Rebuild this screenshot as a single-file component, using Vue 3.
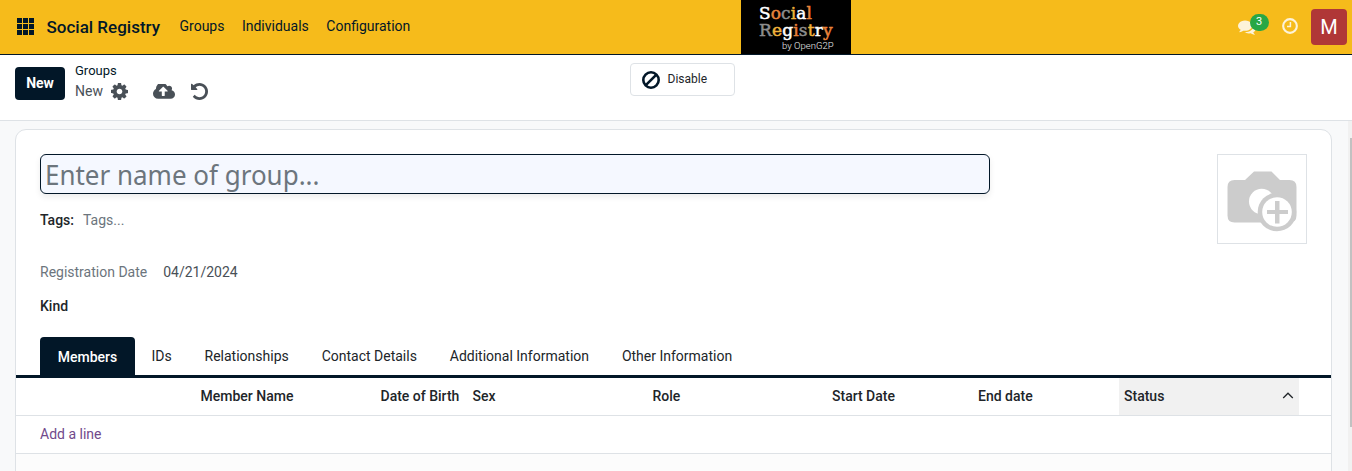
<script setup>
const menus = ['Groups', 'Individuals', 'Configuration']
const tabs = ['IDs', 'Relationships', 'Contact Details', 'Additional Information', 'Other Information']
const columns = ['', 'Member Name', 'Date of Birth', 'Sex', 'Role', 'Start Date', 'End date']
const white = '#ffffff'
const orange = '#e8833a'
const grey = '#8d8d8d'
const gold = '#f0b43c'
const social = [['S', white], ['o', orange], ['c', grey], ['i', gold], ['a', white], ['l', orange]]
const registry = [['R', grey], ['e', gold], ['g', white], ['i', orange], ['s', grey], ['t', gold], ['r', white], ['y', orange]]
</script>

<template>
  <div class="app">
    <header class="navbar">
      <svg class="apps" viewBox="0 0 17 17" shape-rendering="crispEdges">
        <template v-for="r in 3" :key="r">
          <rect v-for="c in 3" :key="c" :x="(c - 1) * 6" :y="(r - 1) * 6" width="5" height="5" />
        </template>
      </svg>
      <span class="brand">Social Registry</span>
      <nav class="menus">
        <a v-for="m in menus" :key="m">{{ m }}</a>
      </nav>
      <div class="logo">
        <div class="slab social"><span v-for="(l, i) in social" :key="i" :style="{ color: l[1] }">{{ l[0] }}</span></div>
        <div class="slab registry"><span v-for="(l, i) in registry" :key="i" :style="{ color: l[1] }">{{ l[0] }}</span></div>
        <div class="by">by OpenG2P</div>
      </div>
      <div class="systray">
        <div class="chat">
          <svg viewBox="0 0 1792 1792"><path d="M1408 768q0 139-94 257t-256.500 186.500-353.500 68.500q-86 0-176-16-124 88-278 128-36 9-86 16h-3q-11 0-20.500-8t-11.500-21q-1-3-1-6.500t.5-6.500 2-6l2.500-5 3.500-5.500 4-5 4.500-5 4-4.500q5-6 23-25t26-29.500 22.500-29 25-38.500 20.500-44q-124-72-195-177t-71-224q0-139 94-257t256.500-186.500 353.500-68.500 353.500 68.500 256.500 186.500 94 257zm384 256q0 120-71 224.500t-195 176.500q10 24 20.500 44t25 38.500 22.500 29 26 29.500 23 25q1 1 4 4.500t4.500 5 4 5 3.500 5.500l2.500 5 2 6 .5 6.500-1 6.500q-3 14-13 22t-22 7q-50-7-86-16-154-40-278-128-90 16-176 16-271 0-472-132 58 4 88 4 161 0 309-45t264-129q125-92 192-212t67-257q0-77-23-152 129 71 204 178t75 230z" /></svg>
          <span class="badge">3</span>
        </div>
        <svg class="clock" viewBox="0 0 16 16">
          <circle cx="8" cy="8" r="6.850" />
          <path d="M8.400 4v4.600H5" />
        </svg>
        <span class="avatar">M</span>
      </div>
    </header>

    <section class="control">
      <button class="new">New</button>
      <div class="crumbs">
        <span class="parent">Groups</span>
        <div class="current">
          <span class="name">New</span>
          <svg class="cog" viewBox="128 128 1536 1536"><path d="M1152 896q0-106-75-181t-181-75-181 75-75 181 75 181 181 75 181-75 75-181zm512-109v222q0 12-8 23t-20 13l-185 28q-19 54-39 91 35 50 107 138 10 12 10 25t-9 23q-27 37-99 108t-94 71q-12 0-26-9l-138-108q-44 23-91 38-16 136-29 186-7 28-36 28h-222q-14 0-24.500-8.500t-11.500-21.500l-28-184q-49-16-90-37l-141 107q-10 9-25 9-14 0-25-11-126-114-165-168-7-10-7-23 0-12 8-23 15-21 51-66.500t54-70.500q-27-50-41-99l-183-27q-13-2-21-12.500t-8-23.500v-222q0-12 8-23t19-13l186-28q14-46 39-92-40-57-107-138-10-12-10-24 0-10 9-23 26-36 98.500-107.500t94.500-71.500q13 0 26 10l138 107q44-23 91-38 16-136 29-186 7-28 36-28h222q14 0 24.500 8.500t11.500 21.500l28 184q49 16 90 37l142-107q9-9 24-9 13 0 25 10 129 119 165 170 7 8 7 22 0 12-8 23-15 21-51 66.500t-54 70.500q26 50 41 98l183 28q13 2 21 12.500t8 23.500z" /></svg>
          <svg class="cloud" viewBox="0 256 1920 1280"><path d="M1280 864q0-14-9-23l-352-352q-9-9-23-9t-23 9l-351 351q-10 12-10 24 0 14 9 23t23 9h224v352q0 13 9.500 22.500t22.500 9.500h192q13 0 22.500-9.500t9.500-22.500v-352h224q13 0 22.500-9.500t9.500-22.500zm640 288q0 159-112.500 271.500t-271.500 112.500h-1088q-185 0-316.500-131.500t-131.500-316.500q0-130 70-240t188-165q-2-30-2-43 0-212 150-362t362-150q156 0 285.500 87t188.500 231q71-62 166-62 106 0 181 75t75 181q0 76-41 138 130 31 213.500 135.500t83.500 238.500z" /></svg>
          <svg class="undo" viewBox="128 128 1536 1536"><path d="M1664 896q0 156-61 298t-164 245-245 164-298 61q-172 0-327-72.500t-264-204.500q-7-10-6.500-22.500t8.500-20.500l137-138q10-9 25-9 16 2 23 12 73 95 179 147t225 52q104 0 198.500-40.500t163.500-109.500 109.500-163.500 40.500-198.500-40.500-198.500-109.500-163.500-163.500-109.500-198.500-40.500q-98 0-188 35.500t-160 101.500l137 138q31 30 14 69-17 40-59 40h-448q-26 0-45-19t-19-45v-448q0-42 40-59 39-17 69 14l130 129q107-101 244.500-156.500t284.500-55.500q156 0 298 61t245 164 164 245 61 298z" /></svg>
        </div>
      </div>
      <button class="disable">
        <svg viewBox="0 0 18 18"><circle cx="9" cy="9" r="7.700" /><path d="M3.600 14.400 14.400 3.600" /></svg>
        <span>Disable</span>
      </button>
    </section>

    <main class="content">
      <div class="sheet">
        <div class="top">
          <div class="fields">
            <div class="title"><span>Enter name of group...</span></div>
            <div class="tags"><b>Tags:</b><span>Tags...</span></div>
            <div class="date"><label>Registration Date</label><span>04/21/2024</span></div>
            <div class="kind">Kind</div>
          </div>
          <div class="photo">
            <svg viewBox="0 0 88 88">
              <path fill="#ccc" d="M36 16.500h17.500l8.500 8.500H71.500q7 0 7 7v28.500q0 7-7 7H16.500q-7 0-7-7V32q0-7 7-7h10.500z" />
              <circle cx="43.700" cy="46.500" r="12.700" fill="#fff" />
              <circle cx="59" cy="57" r="19.300" fill="#ccc" />
              <circle cx="59" cy="57" r="14.800" fill="#fff" />
              <path fill="#ccc" d="M57 46h4.500V55h8.500v4h-8.500v9.500H57v-9.500h-8v-4h8z" />
            </svg>
          </div>
        </div>
        <div class="tabs">
          <span class="tab active">Members</span>
          <span v-for="t in tabs" :key="t" class="tab">{{ t }}</span>
        </div>
        <div class="thead">
          <span v-for="c in columns" :key="c">{{ c }}</span>
          <span class="sorted">Status
            <svg viewBox="0 0 12 8"><path d="M1.200 6 6 1.200 10.800 6" /></svg>
          </span>
        </div>
        <div class="add">Add a line</div>
        <div class="rest"></div>
      </div>
      <div class="track"><div class="thumb"></div></div>
    </main>
  </div>
</template>

<style>
body { overflow: hidden; }
</style>

<style scoped>
* { box-sizing: border-box; }
.app { width: 1352px; height: 471px; display: flex; flex-direction: column; overflow: hidden; background: #fff; font: 14px/21px Roboto, sans-serif; color: #212529; }
svg { display: block; flex: none; }

.navbar { position: relative; height: 55px; flex: none; display: flex; align-items: center; padding: 0 5px 1px 17px; background: #f6bb1b; border-bottom: 1px solid #021728; }
.apps { width: 17px; height: 17px; fill: #021728; }
.brand { margin-left: 12.500px; padding-top: 2px; width: 133px; font-size: 17px; font-weight: 500; color: #021728; white-space: nowrap; }
.menus { display: flex; gap: 17.500px; color: #021728; padding-bottom: 1px; }
.logo { position: absolute; left: 741px; top: 0; width: 110px; height: 54px; padding: 5px 0 0 18px; background: #000; }
.slab { height: 17px; font: 17px/17px "DejaVu Serif", serif; -webkit-text-stroke: .5px; white-space: nowrap; width: max-content; }
.social { letter-spacing: .1px; }
.registry { letter-spacing: .15px; }
.by { margin: 1px 0 0 23px; font: 300 9.500px/11px Roboto, sans-serif; color: #eee; }
.systray { margin-left: auto; display: flex; align-items: center; }
.chat { position: relative; width: 44.500px; }
.chat svg { width: 18px; height: 18px; fill: #fdf3d9; }
.badge { position: absolute; left: 12px; top: -4px; width: 19px; height: 17px; border-radius: 9px; background: #28a745; color: #fff; font-size: 11px; line-height: 15px; text-align: center; }
.clock { width: 16px; height: 16px; margin: -1px 13px 0 0; fill: none; stroke: #fdf3d9; stroke-width: 2.100; }
.clock path { stroke-width: 1.500; }
.avatar { width: 36px; height: 36px; border-radius: 4px; background: #b03737; color: #fff; font-size: 20px; line-height: 36px; text-align: center; }

.control { height: 66px; flex: none; display: flex; align-items: flex-start; padding-left: 15px; border-bottom: 1px solid #dee2e6; }
button { font-family: inherit; margin: 0; }
.new { width: 50px; height: 33px; margin-top: 12px; padding: 0 0 2px; border: 0; border-radius: 4px; background: #021728; color: #fff; font-size: 14px; font-weight: 700; }
.crumbs { width: 565px; padding: 6px 0 0 10px; }
.parent { display: block; font-size: 13px; line-height: 20px; color: #021728; }
.current { display: flex; align-items: center; height: 20px; color: #495057; }
.current svg { fill: #495057; }
.name { width: 36px; }
.cog { width: 17px; height: 17px; }
.cloud { width: 22px; height: 15px; margin-left: 25px; }
.undo { width: 17px; height: 17px; margin-left: 16px; }
.disable { display: flex; align-items: center; width: 105px; height: 33px; margin-top: 8px; padding: 0 0 0 11px; border: 1px solid #dee2e6; border-radius: 4px; background: #fff; font-size: 12px; color: #212529; }
.disable svg { width: 18px; height: 18px; margin-right: 7.500px; fill: none; stroke: #021728; stroke-width: 2.600; }
.disable span { padding-bottom: 2px; }

.content { flex: 1; display: flex; background: #f8f9fa; padding-left: 15px; }
.sheet { width: 1317px; height: 360px; margin-top: 8px; flex: none; background: #fff; border: 1px solid #dee2e6; border-radius: 11px; overflow: hidden; }
.top { height: 207px; padding: 24px; display: flex; justify-content: space-between; }
.title { width: 950px; height: 40px; padding-left: 4px; border: 1px solid #021728; border-radius: 6px; background: #f5f8ff; color: #6c757d; font: 27px/40px "Noto Sans", sans-serif; white-space: nowrap; box-shadow: 0 3px 6px rgba(0, 0, 0, .08); }
.title span { display: inline-block; transform: scaleX(.962); transform-origin: 0 0; }
.tags { margin-top: 16px; display: flex; gap: 9px; color: #6c757d; }
.tags b { font-weight: 500; color: #212529; }
.date { margin-top: 31px; display: flex; gap: 16px; color: #495057; }
.date label { color: #6c757d; }
.kind { margin-top: 13px; font-weight: 500; }
.photo { width: 90px; height: 90px; border: 1px solid #dee2e6; }
.tabs { height: 41px; padding-left: 24px; display: flex; border-bottom: 3px solid #021728; }
.tab { height: 38px; padding: 0 16.450px; line-height: 38px; }
.tab.active { width: 95px; padding: 0; border-radius: 4px 4px 0 0; background: #021728; color: #fff; font-weight: 500; line-height: 40px; text-align: center; }
.thead { display: grid; grid-template-columns: 179.500px 180px 92px 180px 179.500px 146px 146px 180px; height: 38px; border-bottom: 1px solid #dee2e6; font-weight: 500; line-height: 37px; }
.thead > span { padding-left: 5px; white-space: nowrap; }
.thead .sorted { display: flex; align-items: center; justify-content: space-between; padding-right: 5px; background: #f1f1f1; }
.sorted svg { width: 12px; height: 8px; margin-bottom: 1px; fill: none; stroke: #212529; stroke-width: 1.300; }
.add { height: 38px; padding-left: 24px; line-height: 37px; border-bottom: 1px solid #dee2e6; color: #71498b; }
.rest { height: 40px; background: #fcfcfc; }
.track { width: 4px; margin-left: auto; padding: 17px 0 0 2px; background: #f1f1f1; }
.thumb { height: 289px; background: #c1c1c1; }
</style>
